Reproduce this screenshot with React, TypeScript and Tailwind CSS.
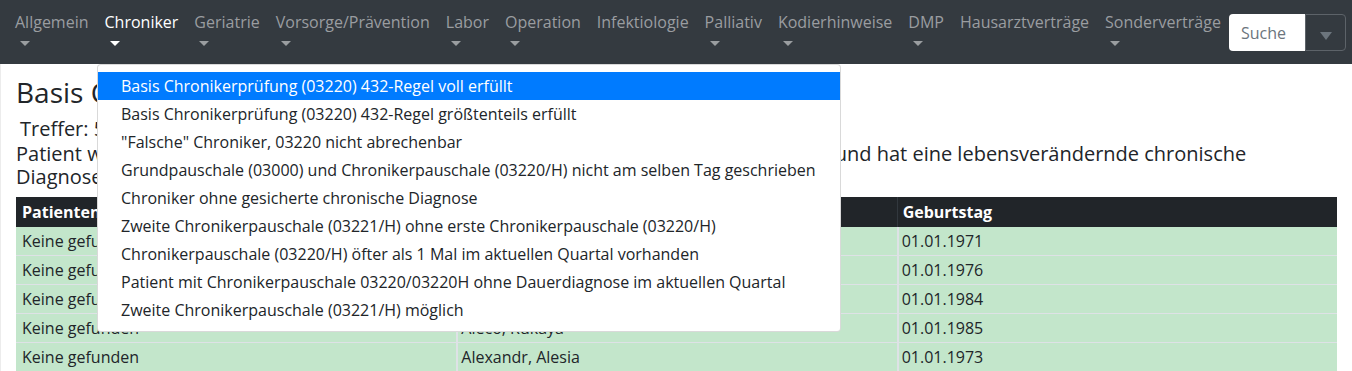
import React from 'react';

const navItems = [
    { name: 'Allgemein', caret: true },
    { name: 'Chroniker', caret: true, active: true },
    { name: 'Geriatrie', caret: true },
    { name: 'Vorsorge/Prävention', caret: true },
    { name: 'Labor', caret: true },
    { name: 'Operation', caret: true },
    { name: 'Infektiologie', caret: false },
    { name: 'Palliativ', caret: true },
    { name: 'Kodierhinweise', caret: true },
    { name: 'DMP', caret: true },
    { name: 'Hausarztverträge', caret: false },
    { name: 'Sonderverträge', caret: true },
];

const menuItems = [
    'Basis Chronikerprüfung (03220) 432-Regel voll erfüllt',
    'Basis Chronikerprüfung (03220) 432-Regel größtenteils erfüllt',
    '"Falsche" Chroniker, 03220 nicht abrechenbar',
    'Grundpauschale (03000) und Chronikerpauschale (03220/H) nicht am selben Tag geschrieben',
    'Chroniker ohne gesicherte chronische Diagnose',
    'Zweite Chronikerpauschale (03221/H) ohne erste Chronikerpauschale (03220/H)',
    'Chronikerpauschale (03220/H) öfter als 1 Mal im aktuellen Quartal vorhanden',
    'Patient mit Chronikerpauschale 03220/03220H ohne Dauerdiagnose im aktuellen Quartal',
    'Zweite Chronikerpauschale (03221/H) möglich',
];

const rows = [
    { id: 'Keine gefunden', name: 'Abadi, Amira', birth: '01.01.1971' },
    { id: 'Keine gefunden', name: 'Abel, Dominik', birth: '01.01.1976' },
    { id: 'Keine gefunden', name: 'Adam, Lina', birth: '01.01.1984' },
    { id: 'Keine gefunden', name: 'Aleco, Rukaya', birth: '01.01.1985' },
    { id: 'Keine gefunden', name: 'Alexandr, Alesia', birth: '01.01.1973' },
];

const App = () => {
    return (
        <div className="relative h-[371px] overflow-hidden bg-white font-['Open_Sans',sans-serif] text-[#212529]">
            {/* Navbar */}
            <nav className="flex items-start h-[64px] bg-[#343a40] pl-[7px] pr-[6px]">
                {navItems.map((item) => (
                    <div key={item.name} className="flex flex-col px-2 pt-[10px]">
                        <span className={`text-[16px] leading-[24px] whitespace-nowrap ${item.active ? 'text-white' : 'text-[#9a9da0]'}`}>
                            {item.name}
                        </span>
                        {item.caret && (
                            <span
                                className={`ml-[5px] mt-[7px] w-0 h-0 border-x-[5px] border-x-transparent border-t-[5px] ${item.active ? 'border-t-white' : 'border-t-[#9a9da0]'}`}
                            />
                        )}
                    </div>
                ))}
                <div className="ml-auto mt-[14px] flex h-[37px]">
                    <div className="w-[76px] bg-white rounded-l-[4px] flex items-center px-3 text-[16px] text-[#6c757d]">
                        Suche
                    </div>
                    <div className="w-[41px] border border-[#5d6369] rounded-r-[4px] flex items-center justify-center">
                        <span className="mt-[6px] w-0 h-0 border-x-[6px] border-x-transparent border-t-[8px] border-t-[#6c757d]" />
                    </div>
                </div>
            </nav>

            {/* Content */}
            <div className="border-l border-[#ececec] pl-[15px] pr-[15px] pt-[12px]">
                <h3 className="text-[28px] leading-[33px]">Basis Chronikerprüfung (03220) 432-Regel voll erfüllt</h3>
                <div className="mt-[8px] pl-[4px] text-[20px] leading-[23px]">Treffer: 5</div>
                <p className="mt-[2px] text-[20px] leading-[23px]">
                    Patient wurde in den letzten vier Quartalen regelmäßig (mindestens dreimal) behandelt und hat eine lebensverändernde chronische
                    <br />
                    Diagnose.
                </p>

                {/* Table */}
                <div className="mt-[9px] text-[16px]">
                    <div className="grid grid-cols-3 h-[30px] bg-[#212529] text-white font-bold">
                        <div className="px-[6px] flex items-center">Patientennummer</div>
                        <div className="px-[5px] flex items-center border-l border-[#32383e]">Name</div>
                        <div className="px-[5px] flex items-center border-l border-[#32383e]">Geburtstag</div>
                    </div>
                    {rows.map((row, i) => (
                        <div key={i} className="grid grid-cols-3 h-[29px] bg-[#c3e6cb] border-b border-[#dee2e6]">
                            <div className="px-[6px] flex items-center">{row.id}</div>
                            <div className="px-[3px] flex items-center border-l-2 border-[#dee2e6]">{row.name}</div>
                            <div className="px-[3px] flex items-center border-l-2 border-[#dee2e6]">{row.birth}</div>
                        </div>
                    ))}
                </div>
            </div>

            {/* Dropdown menu */}
            <div className="absolute left-[97px] top-[64px] w-[744px] bg-white border border-black/15 rounded-[4px] py-[7px]">
                {menuItems.map((item, i) => (
                    <div
                        key={item}
                        className={`h-[28px] flex items-center px-[23px] text-[16px] whitespace-nowrap ${i === 0 ? 'bg-[#007bff] text-white' : 'text-[#212529]'}`}
                    >
                        {item}
                    </div>
                ))}
            </div>
        </div>
    );
};

export default App;
